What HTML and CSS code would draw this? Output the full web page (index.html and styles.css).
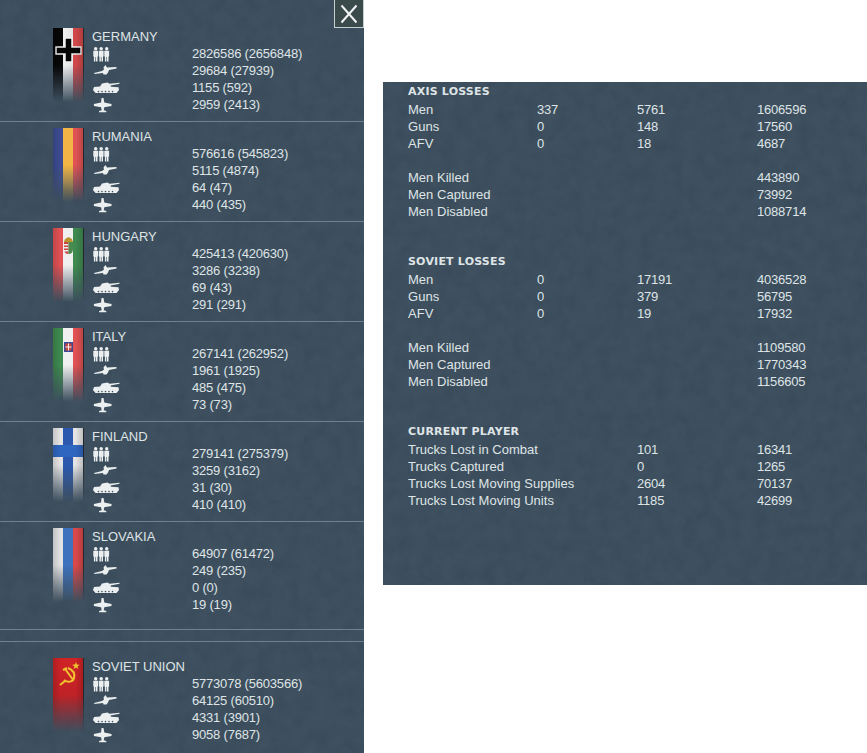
FILE: index.html
```html
<!DOCTYPE html>
<html lang="en">
<head>
    <meta charset="UTF-8">
    <meta name="viewport" content="width=device-width, initial-scale=1.0">
    <title>Losses</title>
    <link rel="stylesheet" href="styles.css">
</head>
<body>

    <svg class="defs" width="0" height="0">
        <symbol id="men" viewBox="0 -1 28 17">
            <g id="man">
                <circle cx="2.700" cy="2.800" r="1.700"/>
                <path d="M.3 4.800h4.800v5.700h-.6v5h-1.500v-4.500h-.6v4.500h-1.500v-5h-.6z"/>
            </g>
            <use href="#man" x="5.500"/>
            <use href="#man" x="11"/>
        </symbol>
        <symbol id="gun" viewBox="0 -1 28 17">
            <path d="M1 10l8-2 2-1.500-.5-2 2-2.500 1.500 2.500 9.500-.5v1.500l-7.500 1.500-1 2.500-1.500 2h-3l-.5-1.500-8.500 1z"/>
        </symbol>
        <symbol id="tank" viewBox="0 -1 28 17">
            <path d="M1 7l6-.5 2-3 5.500-1 2 1.200 10-1v1l-9 1.800.5 1.200 7.500.5.5 2.800-2.500 3h-21l-2.500-3z"/>
            <g fill="#3f5261">
                <circle cx="5.500" cy="11.600" r=".8"/><circle cx="9" cy="11.600" r=".8"/><circle cx="12.500" cy="11.600" r=".8"/><circle cx="16" cy="11.600" r=".8"/><circle cx="19.500" cy="11.600" r=".8"/>
            </g>
        </symbol>
        <symbol id="plane" viewBox="0 -1 28 17">
            <path d="M8.500 1h2l.8 4.500 7.200 1.500v2l-7.200 1.200-.6 3 2.600.8v1.200h-7.200v-1.200l2.600-.8-.6-3-7.200-1.200v-2l7.200-1.500z"/>
        </symbol>
    </svg>

    <div class="page">
        <div class="panel side">
            <button class="close" aria-label="Close">
                <svg width="28" height="26" viewBox="0 0 28 26"><path d="M6.500 4.500l15 17M21.500 4.500l-15 17"/></svg>
            </button>

            <div class="nation first">
                <div class="flag flag-germany">
                    <svg width="31" height="72" viewBox="0 0 31 72">
                        <path class="cross" d="M12 10h7v9h9v7h-9v8h-7v-8h-9v-7h9z"/>
                    </svg>
                </div>
                <div class="name">GERMANY</div>
                <svg class="icon"><use href="#men"/></svg><div class="val">2826586 (2656848)</div>
                <svg class="icon"><use href="#gun"/></svg><div class="val">29684 (27939)</div>
                <svg class="icon"><use href="#tank"/></svg><div class="val">1155 (592)</div>
                <svg class="icon"><use href="#plane"/></svg><div class="val">2959 (2413)</div>
            </div>

            <div class="nation">
                <div class="flag flag-rumania"></div>
                <div class="name">RUMANIA</div>
                <svg class="icon"><use href="#men"/></svg><div class="val">576616 (545823)</div>
                <svg class="icon"><use href="#gun"/></svg><div class="val">5115 (4874)</div>
                <svg class="icon"><use href="#tank"/></svg><div class="val">64 (47)</div>
                <svg class="icon"><use href="#plane"/></svg><div class="val">440 (435)</div>
            </div>

            <div class="nation">
                <div class="flag flag-hungary">
                    <svg width="31" height="72" viewBox="0 0 31 72">
                        <path fill="#b8932e" d="M11 14l1-3 3.500-2 3.500 2 1 3z"/>
                        <path fill="#c9463f" d="M11 14h4.500v12c-3 0-4.500-2-4.500-5z"/>
                        <path fill="#eee" d="M11 16h4.500v1.500h-4.500zM11 19h4.500v1.500h-4.500zM11 22h4.500v1.500h-4.500z"/>
                        <path fill="#4b8a50" d="M15.500 14h4.500v7c0 3-1.500 5-4.500 5z"/>
                    </svg>
                </div>
                <div class="name">HUNGARY</div>
                <svg class="icon"><use href="#men"/></svg><div class="val">425413 (420630)</div>
                <svg class="icon"><use href="#gun"/></svg><div class="val">3286 (3238)</div>
                <svg class="icon"><use href="#tank"/></svg><div class="val">69 (43)</div>
                <svg class="icon"><use href="#plane"/></svg><div class="val">291 (291)</div>
            </div>

            <div class="nation">
                <div class="flag flag-italy">
                    <svg width="31" height="72" viewBox="0 0 31 72">
                        <rect x="11" y="14" width="9" height="10" fill="#3d4a94"/>
                        <rect x="12.500" y="15.500" width="6" height="7" fill="#c9463f"/>
                        <path fill="#eee" d="M15 15.500h1v7h-1zM12.500 18.500h6v1h-6z"/>
                    </svg>
                </div>
                <div class="name">ITALY</div>
                <svg class="icon"><use href="#men"/></svg><div class="val">267141 (262952)</div>
                <svg class="icon"><use href="#gun"/></svg><div class="val">1961 (1925)</div>
                <svg class="icon"><use href="#tank"/></svg><div class="val">485 (475)</div>
                <svg class="icon"><use href="#plane"/></svg><div class="val">73 (73)</div>
            </div>

            <div class="nation">
                <div class="flag flag-finland"></div>
                <div class="name">FINLAND</div>
                <svg class="icon"><use href="#men"/></svg><div class="val">279141 (275379)</div>
                <svg class="icon"><use href="#gun"/></svg><div class="val">3259 (3162)</div>
                <svg class="icon"><use href="#tank"/></svg><div class="val">31 (30)</div>
                <svg class="icon"><use href="#plane"/></svg><div class="val">410 (410)</div>
            </div>

            <div class="nation last">
                <div class="flag flag-slovakia"></div>
                <div class="name">SLOVAKIA</div>
                <svg class="icon"><use href="#men"/></svg><div class="val">64907 (61472)</div>
                <svg class="icon"><use href="#gun"/></svg><div class="val">249 (235)</div>
                <svg class="icon"><use href="#tank"/></svg><div class="val">0 (0)</div>
                <svg class="icon"><use href="#plane"/></svg><div class="val">19 (19)</div>
            </div>

            <div class="spacer"></div>

            <div class="nation soviet">
                <div class="flag flag-soviet">
                    <svg width="31" height="72" viewBox="0 0 31 72">
                        <path fill="#f2c230" d="M23 4l1 2.600 2.800.1-2.200 1.700.8 2.700-2.400-1.600-2.400 1.600.8-2.700-2.200-1.700 2.800-.1z"/>
                        <path fill="none" stroke="#f2c230" stroke-width="2" d="M15 10c5 2 7 6 6 10-1 4-6 5-10 2"/>
                        <path fill="none" stroke="#f2c230" stroke-width="2" d="M10 12l4-2M12.500 11.500l8 11M7 27l5-4"/>
                    </svg>
                </div>
                <div class="name">SOVIET UNION</div>
                <svg class="icon"><use href="#men"/></svg><div class="val">5773078 (5603566)</div>
                <svg class="icon"><use href="#gun"/></svg><div class="val">64125 (60510)</div>
                <svg class="icon"><use href="#tank"/></svg><div class="val">4331 (3901)</div>
                <svg class="icon"><use href="#plane"/></svg><div class="val">9058 (7687)</div>
            </div>
        </div>

        <div class="panel report">
            <div class="title">AXIS LOSSES</div>
            <div class="table">
                <span>Men</span><span>337</span><span>5761</span><span>1606596</span>
                <span>Guns</span><span>0</span><span>148</span><span>17560</span>
                <span>AFV</span><span>0</span><span>18</span><span>4687</span>
            </div>
            <div class="table gap-one">
                <span>Men Killed</span><span></span><span></span><span>443890</span>
                <span>Men Captured</span><span></span><span></span><span>73992</span>
                <span>Men Disabled</span><span></span><span></span><span>1088714</span>
            </div>

            <div class="title gap-two">SOVIET LOSSES</div>
            <div class="table">
                <span>Men</span><span>0</span><span>17191</span><span>4036528</span>
                <span>Guns</span><span>0</span><span>379</span><span>56795</span>
                <span>AFV</span><span>0</span><span>19</span><span>17932</span>
            </div>
            <div class="table gap-one">
                <span>Men Killed</span><span></span><span></span><span>1109580</span>
                <span>Men Captured</span><span></span><span></span><span>1770343</span>
                <span>Men Disabled</span><span></span><span></span><span>1156605</span>
            </div>

            <div class="title gap-two">CURRENT PLAYER</div>
            <div class="table">
                <span>Trucks Lost in Combat</span><span></span><span>101</span><span>16341</span>
                <span>Trucks Captured</span><span></span><span>0</span><span>1265</span>
                <span>Trucks Lost Moving Supplies</span><span></span><span>2604</span><span>70137</span>
                <span>Trucks Lost Moving Units</span><span></span><span>1185</span><span>42699</span>
            </div>
        </div>
    </div>

</body>
</html>
```

FILE: styles.css
```css
body {
    font-family: 'Liberation Sans', Arial, sans-serif;
    font-size: 13px;
    line-height: 17px;
    letter-spacing: -0.2px;
    margin: 0;
    padding: 0;
    background: white;
    color: #dfe4e6;
    overflow: hidden;
}

.defs {
    position: absolute;
}

.page {
    display: flex;
    align-items: flex-start;
    height: 753px;
}

/* mottled slate texture shared by both panels */
.panel {
    background-color: #3f5160;
    background-image: url("data:image/svg+xml,%3Csvg xmlns='http://www.w3.org/2000/svg' width='500' height='500'%3E%3Cfilter id='n' color-interpolation-filters='sRGB'%3E%3CfeTurbulence type='fractalNoise' baseFrequency='0.07' numOctaves='4'/%3E%3CfeColorMatrix values='0 0 0 0 0.14 0 0 0 0 0.2 0 0 0 0 0.26 0 0 0 0.35 -0.1'/%3E%3C/filter%3E%3Crect width='500' height='500' filter='url(%23n)'/%3E%3C/svg%3E");
}

.side {
    position: relative;
    flex: 0 0 364px;
    height: 753px;
}

.close {
    position: absolute;
    top: 0;
    right: 0;
    width: 30px;
    height: 28px;
    padding: 0;
    background: #3b4a4b;
    border: 1px solid #c5cfcf;
    border-top: 0;
}

.close svg {
    display: block;
}

.close path {
    fill: none;
    stroke: #f2f4f4;
    stroke-width: 2;
}

.nation {
    display: grid;
    grid-template-columns: 31px 8px 100px 1fr;
    padding: 6px 0 8px 53px;
    border-bottom: 1px solid #6f828e;
}

.nation.first { padding-top: 28px; }
.nation.last { padding-bottom: 16px; }
.nation.soviet { padding-top: 16px; border-bottom: 0; }

.spacer {
    height: 11px;
    border-bottom: 1px solid #6f828e;
}

.name {
    grid-column: 3 / 5;
    grid-row: 1;
    letter-spacing: 0;
}

.icon {
    grid-column: 3;
    width: 28px;
    height: 17px;
    margin-left: 1px;
    fill: #ecefef;
}

.val {
    grid-column: 4;
}

.flag {
    grid-column: 1;
    grid-row: 1 / 6;
    position: relative;
    width: 31px;
    height: 74px;
    border-right: 1px solid #20282e;
    box-sizing: border-box;
    -webkit-mask-image: linear-gradient(to bottom, black 50%, transparent 100%);
    mask-image: linear-gradient(to bottom, black 50%, transparent 100%);
}

.flag svg {
    display: block;
}

/* soft shading over the stripes */
.flag::after {
    content: "";
    position: absolute;
    inset: 0;
    background: linear-gradient(to right, rgba(0, 0, 0, 0.14), transparent 25%, transparent 75%, rgba(0, 0, 0, 0.16));
}

.flag-germany { background: linear-gradient(to right, #060606 32%, #f0f0f0 35%, #e4e4e4 65%, #d0484a 68%); }
.flag-rumania { background: linear-gradient(to right, #3d4c92 32%, #f3b545 35%, #f3b545 65%, #e05254 68%); }
.flag-hungary { background: linear-gradient(to right, #e05254 32%, #f0f0f0 35%, #f0f0f0 65%, #3f8a50 68%); }
.flag-italy { background: linear-gradient(to right, #3f8a50 32%, #f0f0f0 35%, #f0f0f0 65%, #e05254 68%); }
.flag-slovakia { background: linear-gradient(to right, #e2e2e2 32%, #3f72bd 35%, #3f72bd 65%, #d9484a 68%); }
.flag-soviet { background: linear-gradient(to bottom, #cf2326, #b02026); }

.flag-finland {
    background:
        linear-gradient(to bottom, transparent 17px, #2f66c0 17px, #2f66c0 29px, transparent 29px),
        linear-gradient(to right, #e4e4e4 32%, #2c58ae 35%, #2c58ae 65%, #e4e4e4 68%);
}

.cross {
    fill: #060606;
    stroke: #f0f0f0;
    stroke-width: 1.5;
}

.report {
    flex: 1;
    height: 503px;
    margin: 82px 0 0 19px;
    padding-left: 25px;
    box-sizing: border-box;
}

.title {
    font-family: 'DejaVu Sans', sans-serif;
    font-size: 11px;
    font-weight: bold;
    line-height: 19px;
    letter-spacing: 0.2px;
}

.table {
    display: grid;
    grid-template-columns: 129px 100px 120px 1fr;
}

.table span {
    height: 17px;
    white-space: nowrap;
}

/* the row labels run a little wider than the numbers */
.table span:nth-child(4n+1) {
    letter-spacing: 0.02px;
}

.gap-one { margin-top: 17px; }
.gap-two { margin-top: 32px; }
```
